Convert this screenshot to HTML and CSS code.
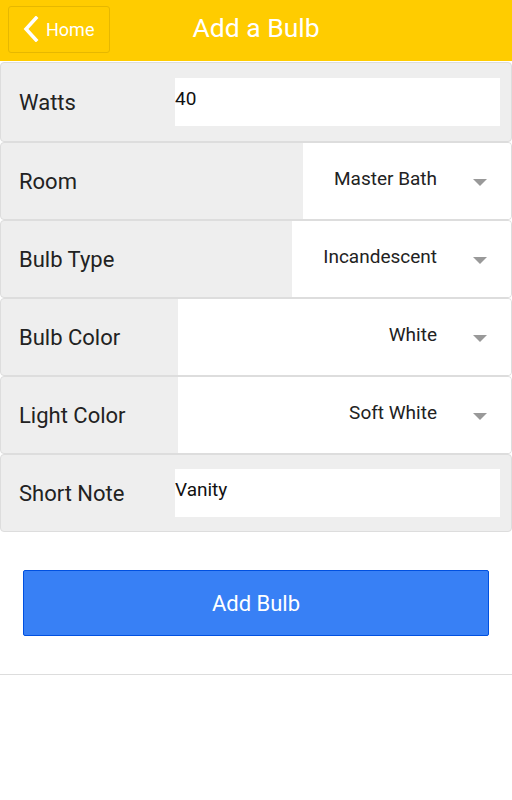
FILE: index.html
```html
<!DOCTYPE html>
<html lang="en">
<head>
  <meta charset="UTF-8" />
  <meta name="viewport" content="width=device-width, initial-scale=1.0" />
  <title>Add a Bulb</title>
  <link rel="stylesheet" href="styles.css">
</head>
<body>
  <header class="header">
    <a class="back" href="#">
      <svg width="16" height="26" viewBox="0 0 16 26">
        <path d="M13 2 L3 13 L13 24" fill="none" stroke="#fff" stroke-width="3.5" stroke-linecap="square" />
      </svg>
      <span>Home</span>
    </a>
    <h1>Add a Bulb</h1>
  </header>

  <form class="bulb-form">
    <div class="row">
      <label>Watts</label>
      <input class="field" type="text" value="40" />
    </div>

    <div class="row">
      <label>Room</label>
      <div class="select">
        <span>Master Bath</span>
        <i class="caret"></i>
      </div>
    </div>

    <div class="row">
      <label>Bulb Type</label>
      <div class="select">
        <span>Incandescent</span>
        <i class="caret"></i>
      </div>
    </div>

    <div class="row">
      <label>Bulb Color</label>
      <div class="select wide">
        <span>White</span>
        <i class="caret"></i>
      </div>
    </div>

    <div class="row">
      <label>Light Color</label>
      <div class="select wide">
        <span>Soft White</span>
        <i class="caret"></i>
      </div>
    </div>

    <div class="row">
      <label>Short Note</label>
      <input class="field" type="text" value="Vanity" />
    </div>

    <div class="actions">
      <button type="submit">Add Bulb</button>
    </div>
  </form>
</body>
</html>
```

FILE: styles.css
```css
* {
  margin: 0;
  padding: 0;
  box-sizing: border-box;
  font-family: Roboto, 'Noto Sans', sans-serif;
}

body {
  background: #fff;
  width: 512px;
}

.header {
  position: relative;
  height: 62px;
  background: #ffcc00;
  display: flex;
  align-items: center;
  justify-content: center;
  border-bottom: 1px solid #fff;
}

.header h1 {
  color: #fff;
  font-size: 26.5px;
  font-weight: 400;
  margin-top: -6px;
}

.back {
  position: absolute;
  left: 8px;
  top: 6px;
  width: 102px;
  height: 47px;
  display: flex;
  align-items: center;
  gap: 7px;
  padding-left: 14px;
  border: 1px solid #e6b800;
  border-radius: 3px;
  color: #fff;
  text-decoration: none;
  font-size: 18px;
}

.back svg {
  margin-top: -1px;
}

.row {
  display: flex;
  align-items: center;
  height: 78px;
  background: #eee;
  border: 1px solid #ddd;
  border-radius: 4px;
  overflow: hidden;
}

.row:first-child {
  height: 80px;
}

.row label {
  flex: 0 0 auto;
  padding-left: 18px;
  width: 174px;
  font-size: 22px;
  color: #222;
}

.field {
  flex: 1;
  height: 48px;
  margin-right: 11px;
  border: none;
  outline: none;
  background: #fff;
  font-size: 19px;
  color: #111;
  padding: 0 0 7px 0;
}

.select {
  margin-left: auto;
  align-self: stretch;
  display: flex;
  align-items: center;
  padding-left: 31px;
  background: #fff;
  font-size: 19px;
  color: #222;
}

.select span {
  margin-top: -5px;
}

.select.wide {
  min-width: 333px;
  justify-content: flex-end;
}

.caret {
  width: 74px;
  display: flex;
  justify-content: flex-start;
  padding-left: 36px;
  margin-top: 2px;
}

.caret::before {
  content: "";
  border-left: 7px solid transparent;
  border-right: 7px solid transparent;
  border-top: 7px solid #999;
}

.actions {
  padding: 38px 23px 38px;
  border-bottom: 1px solid #ddd;
}

.actions button {
  width: 100%;
  height: 66px;
  background: #3880f5;
  border: 1px solid #0050e0;
  border-radius: 2px;
  color: #fff;
  font-size: 22px;
  cursor: pointer;
}
```
